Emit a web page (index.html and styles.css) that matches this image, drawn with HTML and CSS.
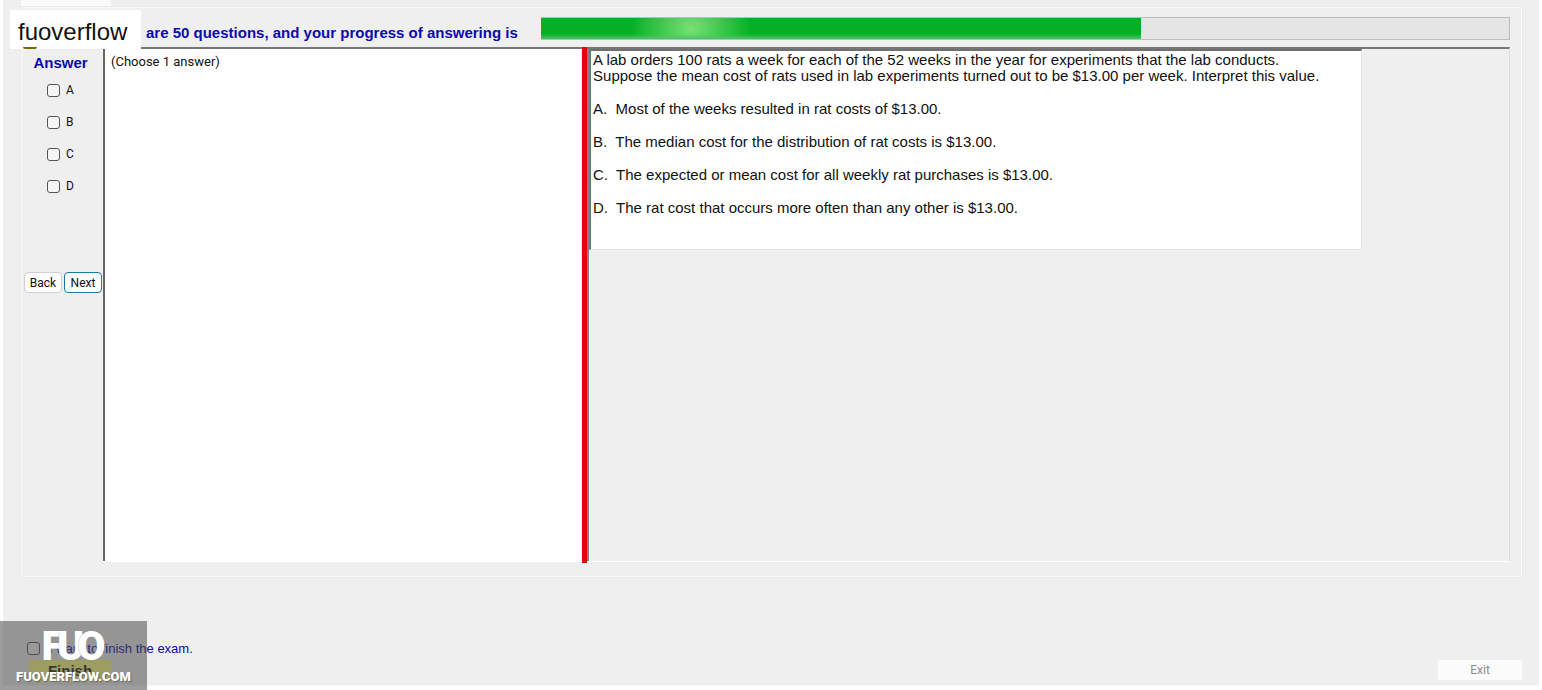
FILE: index.html
```html
<!DOCTYPE html>
<html lang="en">
<head>
<meta charset="utf-8">
<title>Exam</title>
<meta name="viewport" content="width=device-width, initial-scale=1">
<link rel="stylesheet" href="styles.css">
</head>
<body>
<main class="window">
  <div class="tab"></div>
  <section class="group">
    <header class="top">
      <h1 class="summary" id="summary">are 50 questions, and your progress of answering is</h1>
      <div class="progress" role="progressbar" aria-labelledby="summary" aria-valuenow="62" aria-valuemin="0" aria-valuemax="100"><div class="progress-fill" style="width:62%"></div></div>
    </header>
    <div class="workspace">
      <form class="answers">
        <h2 class="answers-title">Answer</h2>
        <div class="choices">
          <label class="choice"><input class="check" type="checkbox">A</label>
          <label class="choice"><input class="check" type="checkbox">B</label>
          <label class="choice"><input class="check" type="checkbox">C</label>
          <label class="choice"><input class="check" type="checkbox">D</label>
        </div>
        <div class="nav">
          <button class="button" type="button">Back</button>
          <button class="button button-default" type="button">Next</button>
        </div>
      </form>
      <div class="panes">
        <div class="pane-left">(Choose 1 answer)</div>
        <div class="splitter"></div>
        <div class="pane-right">
          <article class="question">
            <p>A lab orders 100 rats a week for each of the 52 weeks in the year for experiments that the lab conducts.<br>Suppose the mean cost of rats used in lab experiments turned out to be $13.00 per week. Interpret this value.</p>
            <p>A.&nbsp; Most of the weeks resulted in rat costs of $13.00.</p>
            <p>B.&nbsp; The median cost for the distribution of rat costs is $13.00.</p>
            <p>C.&nbsp; The expected or mean cost for all weekly rat purchases is $13.00.</p>
            <p>D.&nbsp; The rat cost that occurs more often than any other is $13.00.</p>
          </article>
        </div>
      </div>
    </div>
  </section>
  <footer class="bottom">
    <div class="finish-area">
      <label class="finish-label"><input class="check" type="checkbox">I want to finish the exam.</label>
      <button class="finish" type="button">Finish</button>
    </div>
    <button class="exit" type="button" disabled>Exit</button>
  </footer>
</main>
<div class="name-tag">fuoverflow</div>
<div class="watermark">
  <div class="mark"><span class="mark-f">F</span><span class="mark-u">U</span><span class="mark-o">O</span></div>
  <div class="site">FUOVERFLOW.COM</div>
</div>
</body>
</html>
```
FILE: styles.css
```css
* { box-sizing: border-box; }
body {
  margin: 0;
  min-height: 100vh;
  display: flex;
  padding: 0 3px 4px;
  background: #fff;
  color: #111;
  font-family: "Liberation Sans", Arial, sans-serif;
  position: relative;
}
h1, h2, p { margin: 0; }
.window {
  flex: 1;
  min-width: 0;
  display: flex;
  flex-direction: column;
  background: #efefef;
  border-bottom: 1px solid #f6f6f6;
}
.tab { width: 90px; height: 6px; margin-left: 18px; background: #fafafa; }
.group {
  flex: 1;
  display: flex;
  flex-direction: column;
  margin: 0 16px 0 17px;
  padding: 9px 11px 14px 2px;
  border: 2px solid #f9f9f9;
  outline: 1px solid #e9e9e9;
  outline-offset: -1px;
}
.top { display: flex; align-items: center; gap: 23px; padding-left: 122px; height: 23px; margin-bottom: 7px; }
.summary { font-size: 15px; line-height: 18px; color: #0a0ab0; white-space: nowrap; padding-top: 8px; }
.progress { flex: 1; height: 23px; background: #e5e5e5; border: 1px solid #bcbcbc; border-left: 0; }
.progress-fill {
  height: 100%;
  background:
    linear-gradient(to top, #4fc463, transparent 5px),
    radial-gradient(ellipse 60px 50px at 150px 11px, #78e078, transparent),
    #06b025;
}
.workspace { flex: 1; display: flex; }
.answers { width: 79px; display: flex; flex-direction: column; }
.answers-title { margin: 7px 6px 0 0; text-align: center; font-size: 15px; line-height: 18px; color: #0a0ab0; }
.choices { display: flex; flex-direction: column; gap: 16px; padding: 10px 0 0 23px; }
.choice { display: flex; align-items: center; gap: 6px; height: 16px; font: 12px/16px Roboto, sans-serif; }
.check { appearance: none; width: 13px; height: 13px; margin: 0; border: 1px solid #555; border-radius: 3px; background: #f6f6f6; }
.check:checked { background: #0078a8; }
.nav { display: flex; gap: 2px; margin: 78px 1px 0 0; }
.button { flex: 1; height: 21px; padding: 0; border: 1px solid #d0d0d0; border-radius: 4px; background: #fdfdfd; font: 12px/16px Roboto, sans-serif; color: #111; }
.button-default { border-color: #1f78a0; }
.panes { flex: 1; min-width: 0; display: flex; border-top: 2px solid #777; border-bottom: 1px solid #fff; border-right: 1px solid #dcdcdc; }
.pane-left { flex: 0 0 34%; padding: 5px 6px; border-left: 2px solid #666; background: #fff; font: 13px/16px Roboto, sans-serif; }
.splitter { width: 5px; background: #e60505; margin: -2px 0 -2px 1px; position: relative; }
.pane-right { flex: 1; border-left: 2px solid #8a7a82; }
.question {
  width: 84%;
  min-height: 201px;
  padding: 1px 2px;
  border: 1px solid #e2e2e2;
  border-top: 2px solid #707070;
  border-left: 2px solid #777;
  background: #fff;
  font-size: 15px;
  line-height: 16px;
}
.question p { margin-bottom: 17px; }
.bottom { display: flex; justify-content: space-between; height: 107px; padding: 60px 17px 0 24px; }
.finish-area { display: flex; flex-direction: column; gap: 2px; }
.finish-label { display: flex; align-items: center; gap: 9px; height: 20px; font-size: 13px; color: #0a0ab0; }
.finish { width: 82px; height: 22px; margin-left: 2px; padding: 0; border: 0; background: #ffff80; font: bold 15px/18px "Liberation Sans", sans-serif; color: #222; }
.exit { width: 84px; height: 20px; margin-top: 22px; padding: 0; border: 0; border-radius: 2px; background: #fbfbfb; font: 12px/16px Roboto, sans-serif; color: #8c8c8c; }
.name-tag { position: absolute; left: 10px; top: 10px; width: 131px; padding: 10px 8px 5px; background: #fff; font: 24px/24px "Liberation Sans", sans-serif; color: #111; }
.name-tag::after { content: ""; position: absolute; left: 13px; top: 37px; width: 14px; height: 2px; border-radius: 0 0 7px 7px; background: #6b6b10; }
.watermark { position: absolute; left: 0; bottom: 0; width: 147px; height: 69px; padding-top: 5px; background: rgba(70, 70, 70, .53); color: #fff; text-align: center; white-space: nowrap; }
.mark { font: 900 41px/40px Roboto, sans-serif; text-shadow: 0 0 1px #999; }
.mark-u { margin: 0 -7px; }
.site { font: 900 13px/22px Roboto, sans-serif; text-shadow: 1px 1px 1px #666; }
```
